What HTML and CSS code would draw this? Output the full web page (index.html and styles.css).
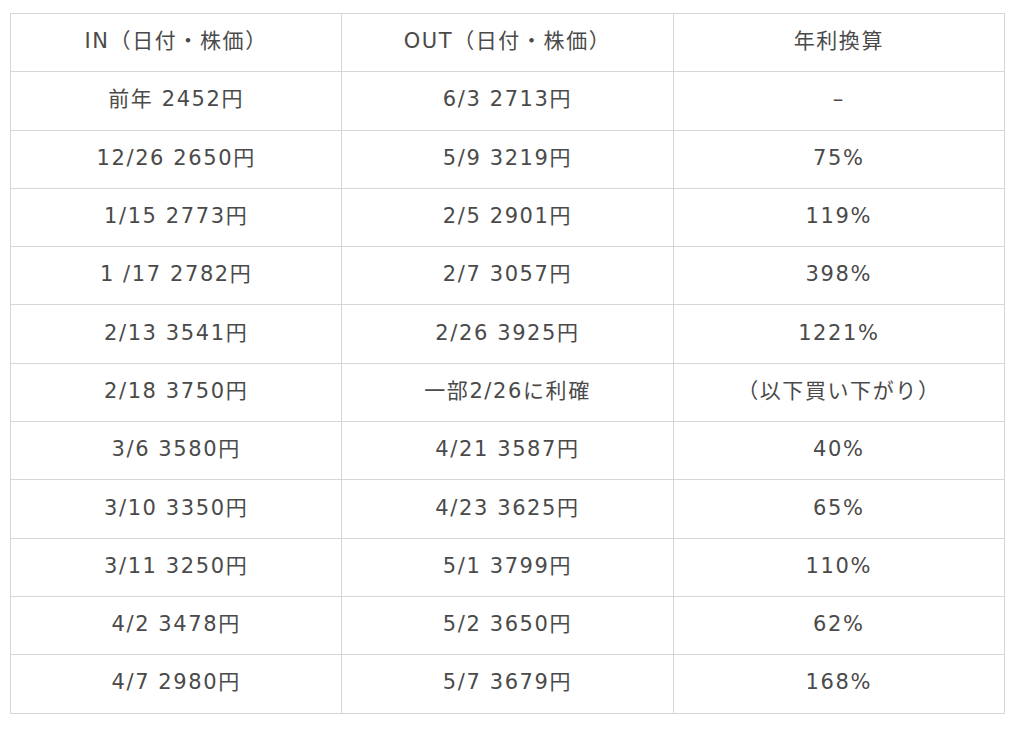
FILE: index.html
```html
<!DOCTYPE html>
<html lang="ja">
<head>
<meta charset="utf-8">
<link rel="stylesheet" href="styles.css">
</head>
<body>
<table class="trades">
  <tr><td>IN（日付・株価）</td><td>OUT（日付・株価）</td><td>年利換算</td></tr>
  <tr><td>前年 2452円</td><td>6/3 2713円</td><td>–</td></tr>
  <tr><td>12/26 2650円</td><td>5/9 3219円</td><td>75%</td></tr>
  <tr><td>1/15 2773円</td><td>2/5 2901円</td><td>119%</td></tr>
  <tr><td>1 /17 2782円</td><td>2/7 3057円</td><td>398%</td></tr>
  <tr><td>2/13 3541円</td><td>2/26 3925円</td><td>1221%</td></tr>
  <tr><td>2/18 3750円</td><td>一部2/26に利確</td><td>（以下買い下がり）</td></tr>
  <tr><td>3/6 3580円</td><td>4/21 3587円</td><td>40%</td></tr>
  <tr><td>3/10 3350円</td><td>4/23 3625円</td><td>65%</td></tr>
  <tr><td>3/11 3250円</td><td>5/1 3799円</td><td>110%</td></tr>
  <tr><td>4/2 3478円</td><td>5/2 3650円</td><td>62%</td></tr>
  <tr><td>4/7 2980円</td><td>5/7 3679円</td><td>168%</td></tr>
</table>
</body>
</html>
```
FILE: styles.css
```css
html, body {
  margin: 0;
  background: #fff;
}
body {
  padding: 13px 0 0 10px;
  font-family: "DejaVu Sans", "Noto Sans CJK JP", sans-serif;
  color: #4a4a4a;
}
.trades {
  width: 995px;
  border-collapse: collapse;
  table-layout: fixed;
}
.trades td {
  border: 1.5px solid #d6d6d6;
  height: 58.3px;
  padding: 0 0 2px;
  box-sizing: border-box;
  text-align: center;
  vertical-align: middle;
  font-size: 21px;
  letter-spacing: 1.6px;
  line-height: 1;
}
```
